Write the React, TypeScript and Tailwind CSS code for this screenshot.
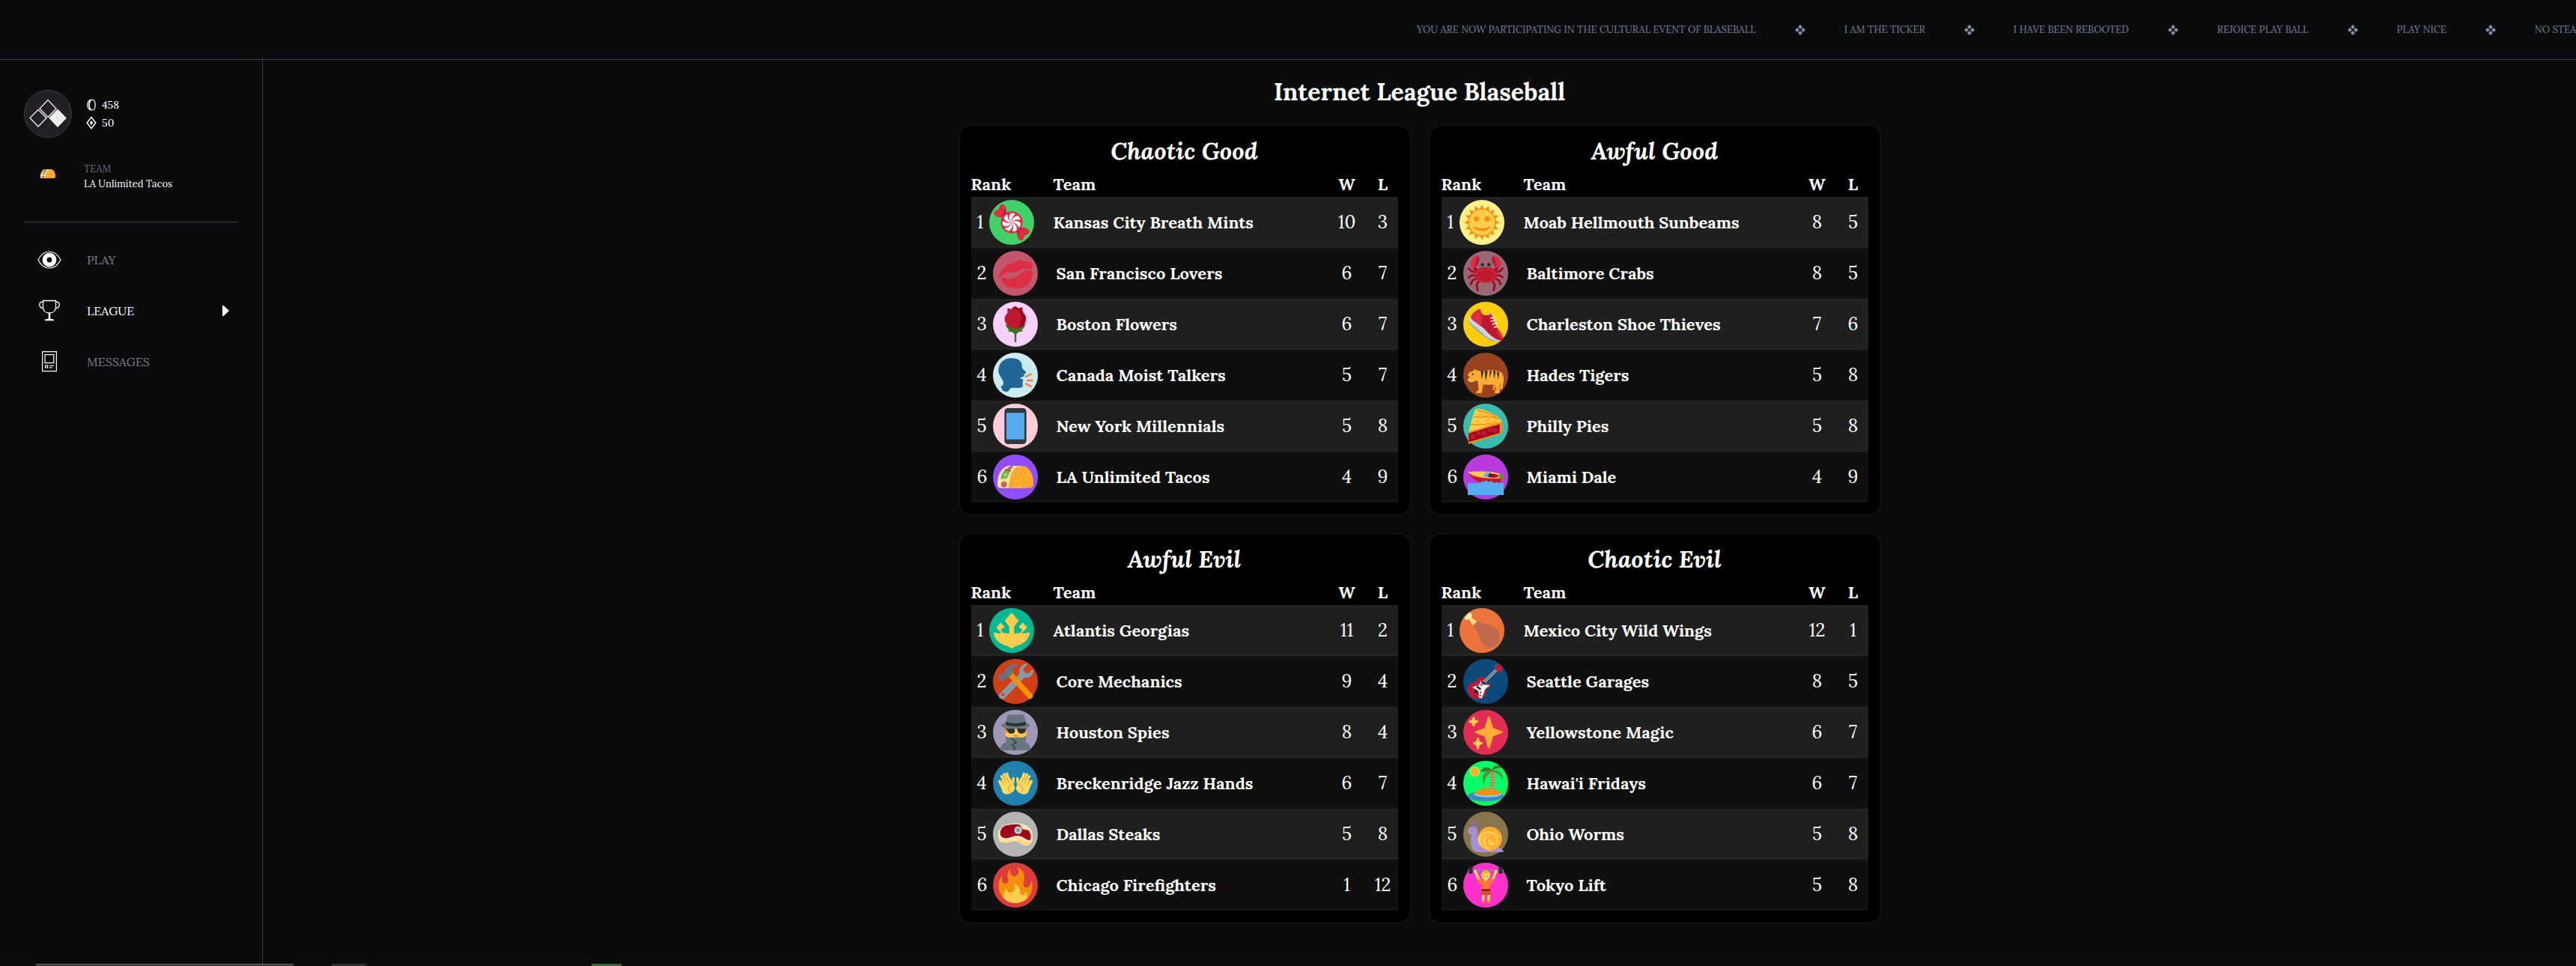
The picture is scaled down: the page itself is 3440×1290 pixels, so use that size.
import React from "react";

type Team = { name: string; w: number; l: number; bg: string; icon: () => React.ReactNode };

/* ---------- team emblems, all on a 36-unit grid ---------- */

const Candy = () => (
  <>
    <path fill="#DD2E44" d="M12 9C13 4 12 0 8.500 0 5.500 0 6 4 4.500 5 3 6 0 6 .2 9c.2 3 4 4 8 4z" />
    <path fill="#DD2E44" d="M24 27c-1 5 0 9 3.500 9 3 0 2.500-4 4-5 1.500-1 4.500-1 4.300-4-.2-3-4-4-8-4z" />
    <path fill="#BE1931" d="M13 9c0-2-1-4-2-5 .5 3-.5 5-4 8 2 1 4 1 5 1zM23 27c0 2 1 4 2 5-.5-3 .5-5 4-8-2-1-4-1-5-1z" />
    <circle cx="18" cy="18" r="11" fill="#DD2E44" />
    {[0, 51, 103, 154, 206, 257, 309].map((a) => (
      <path key={a} fill="#F5F8FA" transform={`rotate(${a} 18 18)`} d="M18 18c-3-3-3.500-6-1-9.200 2-.3 3.500.2 4.500 1C18.500 12 17.500 15 18 18z" />
    ))}
  </>
);
const Lips = () => (
  <>
    <path fill="#DD2E44" d="M1 22C2 17 9 8 14 8c3 0 3-1 5-2 3-2 5-1.500 7-.5 2 1 8 .5 9 3.500.6 2-.5 4-1.500 4.500C31 14 27 13 24 14c-3 1-3 3-7 3-5 0-9 0-11 2-2 2-5 5-5 3z" />
    <path fill="#DD2E44" d="M4 24c-.5-1.500 2-2 4-1.500 4 1 8 1 11-1 4-2 6-6 10-6.500 5-1 6 0 6 3 0 6-4 15-14 15C12 33 6 31 4 24z" />
  </>
);
const Rose = () => (
  <>
    <path fill="none" stroke="#3E721D" strokeWidth="1.800" d="M18 22v14M11 24.500c4 0 6 1 7 3.500 1-2.500 3-3.500 7-3.500" />
    <path fill="#3E721D" d="M8 18c2 10 18 10 20 0l-3 1H11z" />
    <path fill="#A0041E" d="M10 2l4 1 2-2 2-1 3 2 4-1c0 3 0 4 2 7 2 2 2 4 1 8-1 4-5 6-10 6z" />
    <path fill="#BE1931" d="M10 2l4 1 2-2 2 1c4 3 6 6 6 11 0 4-2 9-6 9-5 0-9-3-10.500-7C6.500 11 8 9 10 7V2z" />
    <path fill="#A0041E" d="M14 3l2-2 2-1 2 2v2c-2-1.500-4-1.500-6-1z" />
  </>
);
const Talker = () => (
  <>
    <path fill="#269" d="M14 1C6 1 1 6 1 14c0 4 5 8 5 12 0 2-2 3-3 4l1.500 1c-.5 2 2 4 5 3.500 3-.5 2-4 6-4 3 0 6 1 9-.5 2-1 0-3 .7-4 .8-1-.2-1 0-1.500.3-1 .8-1 .3-2-.5-1-3-1-3-1.500s3-1 4-2c.5-.5-.3-1.500.3-2 1-.6 2-1 1.700-2C28 13.500 24.500 12 24.500 9.500 25 5 22 1 14 1z" />
    <path stroke="#FF7A44" strokeWidth="1.900" strokeLinecap="round" d="M28.500 19.500l5-2.500M30 23.200h5M28.500 26.500l5 2.800" />
  </>
);
const Phone = () => (
  <>
    <rect x="7" width="22" height="36" rx="3.500" fill="#31373D" />
    <rect x="9" y="4.500" width="18" height="27" fill="#4289C1" />
    <rect x="9" y="5.200" width="18" height="25.500" fill="#55ACEE" />
  </>
);
const Taco = () => (
  <>
    <path fill="#FFE8B6" d="M0 25C0 15 5 7 12 7h11v22H4c-3 0-4-1-4-4z" />
    <path fill="#77B255" d="M4 16c2-5 5-7 9-8l1 4-5 8H3z" />
    <circle cx="9" cy="11" r="1.200" fill="#DD2E44" /><circle cx="12" cy="9" r="1.200" fill="#DD2E44" />
    <circle cx="14" cy="8" r="1" fill="#BE1931" /><circle cx="12" cy="11.500" r="1" fill="#DD2E44" />
    <path fill="#A6D388" d="M6 15l3-1 1 2-3 2z" />
    <circle cx="7" cy="22" r="2.500" fill="#FFD983" />
    <circle cx="6.500" cy="25.500" r="3" fill="#C1694F" />
    <path fill="#FFE8B6" d="M8 29c4-5 1-12 6-18 3-3 6-4 9-4l2 22z" />
    <path fill="#FFAC33" d="M10 29c3-5 1-11 5-17 3-4 6-5 9-5 8 0 12 8 12 17 0 4-1 5-4 5z" />
    {[[20, 10], [25, 10], [18, 15], [23, 14], [28, 14], [31, 18], [16, 20], [21, 19], [26, 19], [33, 23], [15, 25], [20, 25], [24, 23], [29, 23], [30, 27], [25, 27], [33, 27], [14, 28]].map(([x, y]) => (
      <circle key={`${x}-${y}`} cx={x} cy={y} r=".8" fill="#F4900C" />
    ))}
  </>
);
const Sun = () => (
  <>
    {Array.from({ length: 16 }, (_, i) => (
      <path key={i} fill="#F4900C" transform={`rotate(${i * 22.5} 18 18)`} d="M18 0l2.800 6h-5.600z" />
    ))}
    <circle cx="18" cy="18" r="14" fill="#F4900C" />
    <circle cx="18" cy="18" r="13" fill="#FFCC4D" />
    <circle cx="12.600" cy="14.500" r="2.700" fill="#F4900C" /><circle cx="23.400" cy="14.500" r="2.700" fill="#F4900C" />
    <path fill="#F4900C" d="M9 22c5 2.500 13 2.500 18 0-2 6-16 6-18 0z" />
  </>
);
const Crab = () => (
  <>
    <path fill="none" stroke="#A0041E" strokeWidth="2" strokeLinecap="round" strokeLinejoin="round" d="M9 17l-5-1-3-3M8 20H4l-3 2M9 23l-4 2-2 4M11 26l-2 3 1 6M27 17l5-1 3-3M28 20h4l3 2M27 23l4 2 2 4M25 26l2 3-1 6" />
    <path fill="none" stroke="#A0041E" strokeWidth="2.500" d="M6 10c0 3 2 5 5 6M30 10c0 3-2 5-5 6" />
    <path fill="#DD2E44" d="M3 9C3 4 6 0 10 0l1 5-3 7c-3 2-5 0-5-3zM33 9c0-5-3-9-7-9l-1 5 3 7c3 2 5 0 5-3z" />
    <path fill="#BE1931" d="M10 0c3 3 2 7-2 12-2-1 0-5 2-12zM26 0c-3 3-2 7 2 12 2-1 0-5-2-12z" />
    <path stroke="#66757F" strokeWidth="1" d="M15 10v4M21 10v4" />
    <circle cx="14.700" cy="9.300" r="1.700" fill="#292F33" /><circle cx="21.300" cy="9.300" r="1.700" fill="#292F33" />
    <path fill="#BE1931" d="M6.500 18c1-4 6-6 11.500-6s10.500 2 11.500 6c.5 6-6 10-11.500 10S6 24 6.500 18z" />
    <path fill="none" stroke="#DD2E44" strokeWidth="1.500" strokeDasharray="1.500 1" d="M8 19c2-4 6-5 10-5s8 1 10 5" />
    <path fill="none" stroke="#DD2E44" strokeWidth="1" d="M11 25c4 3 10 3 14 0" />
  </>
);
const Shoe = () => (
  <>
    <path fill="#99AAB5" d="M.5 14c0 3 7 9 13 14 7 6 14 8.500 18 7z" />
    <path fill="#CCD6DD" d="M3 11c-3 0-3 2-1.500 4C4 18 8 21 14 26c7 7 14 10 19 8z" />
    <path fill="#BE1931" d="M11 3c2-1 2 2 3 4 2 3 4 2 7 1 2-.5 3 0 4 3 1 5 4 10 7 14 3 5 5 8 3 9-5 1-12-4-18-11C11 17 5 15 3 11c1-3 5-7 8-8z" />
    <path fill="#DD2E44" d="M11 3c-3 1-7 5-8 8 2 4 6 5 10 9 2-4 2-13-2-17zM29 23c1 5 1 8 6 9 0-2-3-7-4-9z" />
    <path stroke="#F5F8FA" strokeWidth="1.200" strokeLinecap="round" d="M23 12l4-1M23.500 15l4-1M25 18l4-1M26.500 21l4-1" />
    <path fill="none" stroke="#99AAB5" strokeWidth="1.300" d="M20 9l3-2 2 3" />
  </>
);
const Tiger = () => (
  <>
    <path fill="none" stroke="#FFAC33" strokeWidth="2.400" strokeLinecap="round" d="M33 16c3 4 2 8 .5 15" />
    <path fill="#FFAC33" d="M0 21c0-5 1-6 5-7l2-2 2 1c5 2 9 0 14 0 6 0 11 1 12 7 1 5-3 6-3 10v6h-5l.5-3 1-1-1-4c-3-1-9 0-12-.5L14 36H8.500l.5-2 2-1-1-9c-2-1-3 1-6 .5-2 0-4-1-4-3.500z" />
    <path fill="#F4900C" d="M28 28l-1 5h-2l.5-5zM15 27l-1 5 1-1 1-4z" />
    <path fill="#292F33" d="M13 13l1 9 2-8zM17 13l1 11 2-10zM22 13v8l2-7zM25.500 13l1 9 1.500-8zM29 14l1.500 8 1-6z" />
    <circle cx="5" cy="17" r=".9" fill="#292F33" /><circle cx=".8" cy="20" r=".9" fill="#292F33" />
    <path fill="#FFD983" d="M0 22c1 2 4 2 6 1l-1 2c-3 0-5-1-5-3z" />
  </>
);
const Pie = () => (
  <>
    <path fill="#F4900C" d="M1 23l32-9c2 0 2 2 1.500 6-.5 4-.5 5-2.500 6L1 36c-1-3-1-9 0-13z" />
    <path fill="#A0041E" d="M1 25l31-9v9L1 34z" />
    <circle cx="5.500" cy="28.500" r="2.600" fill="#BE1931" /><circle cx="11" cy="25" r="2.300" fill="#BE1931" /><circle cx="16.500" cy="25.500" r="2.600" fill="#BE1931" /><circle cx="22" cy="22" r="2.300" fill="#BE1931" /><circle cx="27" cy="22" r="2.600" fill="#BE1931" />
    <path fill="#FFCC4D" d="M8 1c2-2 18 3 26 11l-1 3C22 18 11 22 1 25c1-7 4-18 7-24z" />
    <path fill="none" stroke="#F4900C" strokeWidth="1.300" d="M9 2c8 1 16 4 23 10M6 9c4-2 6 2 9 0s5 2 8 0 4 2 6 1M3 17c3-2 5 1 8-.5s5 1 8-.5 5 1 8-.5 4 1 6 0" />
    <path fill="none" stroke="#F4900C" strokeWidth="1.500" d="M1 24.500C11 21 22 18 33 15" />
    <path stroke="#FFAC33" strokeWidth="1.500" d="M11 6l5 1M18 7l5 2M8 13l4 .5M17 12l5 .5M24 13l5 1" />
  </>
);
const Boat = () => (
  <>
    <path fill="#BE1931" d="M1 14c3 5 8 9 14 10h17l3-6z" />
    <path fill="#DD2E44" d="M1 15c6 4 18 6 33 5l1-3z" />
    <path fill="#FFCC4D" d="M0 13c8-1 22-1 30 1 5 1 6 2 5 4-1 1-8 1.500-15 1C11 18.500 4 17 0 13z" />
    <path fill="#A0041E" d="M20 15c4-1 9 0 11 2-2 2-8 2-12 .5z" />
    <path fill="#55ACEE" d="M15 17l4-4 3 1-2 4z" /><path fill="#292F33" d="M22 13l3 5h-4z" />
    <path fill="#5C913B" d="M31 15c3-1 5 1 5 5l-2 2c0-3-1-4-3-4z" />
    <path fill="#55ACEE" d="M12 24l3-2 2 1 1-2 3 2 3-1 2 2 4-1 2 2v1H11z" />
    <path fill="#55ACEE" d="M0 24h36v12H0z" />
  </>
);
const Trident = () => (
  <path fill="#FFCC4D" d="M18 0l7 8-4.500 6v7l6-.5 2.500-3-4-3L29 10l4.500 5-3.500 3.500-1.500 2.500c3 0 5-.5 7.500-1.500 0 7-6 12.500-14 14L18 36l-4-2.500c-8-1.500-14-7-14-14C2.500 20.500 4.500 21 7.500 21L6 18.500 2.500 15 7 10l4 4.500-4 3 2.500 3 6 .5v-7L11 8z" />
);
const Tools = () => (
  <>
    <path fill="#8899A6" d="M2.500 30L22 10c-1-5 2-9 7-10l1 1-4 4 1 4 4 1 4-4 1 1c0 5-4 8-9 7L8 34c-4 4-9 0-5.500-4z" />
    <circle cx="5.500" cy="31" r="1.500" fill="#D23F17" />
    <path fill="#F4900C" d="M11 13l4-4 20 22c2 3-2 6-4 4z" />
    <path fill="#66757F" d="M0 13l3-3 1 1 3-3c2-5 7-9 14-7l-.5 1.500C16 2 14 6 16 9l-5 5-4-.5-.5 3.500L4 18z" />
  </>
);
const Spy = () => (
  <>
    <path fill="#66757F" d="M3 36c0-6 3-7 6-8l-1-6h21l-1 6c3 1 5 2 5 8z" />
    <path fill="#FFCC4D" d="M8 12h21v8c0 1-2 3-4 3H12c-2 0-4-1-4-3z" />
    <path fill="#F4900C" d="M8 13h2v6l-2-1zM27 13h2v5l-2 1z" />
    <path fill="#292F33" d="M8 14h21v1l-1 1c0 4-7 5-8 0h-2c-1 5-8 4-8 0l-2-1z" />
    <path fill="#FFCC4D" d="M17 14l1 5h2l-.5-5z" /><path fill="#C1694F" d="M16 21h5v1h-5z" />
    <path fill="#66757F" d="M8 9L10 2c1-3 4-2 8-1.500 5-.5 8-1.500 9 2L29 9z" />
    <ellipse cx="18.300" cy="11" rx="14.300" ry="3.500" fill="#66757F" />
    <path fill="#292F33" d="M8.500 7.500c6 2 13 2 20 0v3c-6 2-14 2-20 0z" />
    <path fill="none" stroke="#292F33" strokeWidth=".9" d="M14 24l5 4-4 2.500 2 3V36" />
  </>
);
const Hand = () => (
  <>
    <path fill="none" stroke="#FFDC5D" strokeWidth="2.500" strokeLinecap="round" d="M2 16l3 6M4 11l5 8M6.500 9l5 10M9.500 8.500L13 19M16 13l-1 9" />
    <path fill="#FFDC5D" d="M1 16l12-3 3 7 1.500 2c0 4-4 7-8 7-3 0-4-1-5-4z" />
    <path fill="none" stroke="#EF9645" strokeWidth=".8" strokeLinecap="round" d="M3.500 15l2.500 4M6 12l3 6M8.500 11l3 6M12 27c-3-4 0-7 4-9" />
  </>
);
const Hands = () => (<><Hand /><g transform="translate(36 0) scale(-1 1)"><Hand /></g></>);
const Steak = () => (
  <>
    <path fill="#FFD983" d="M1 14v8c0 4 5 6 11 4 5-1 8-1 11 1 3 3 7 3 10 1 2-2 2-5 2-9z" />
    <path fill="#FFE8B6" d="M10 8c8-2 20-1 24 6 2 5 2 12-2 12-4 1-5-4-12-3-5 1-8 2-13 2-4 0-6-3-6-7 0-5 4-9 9-10z" />
    <path fill="#A0041E" d="M11 8.800c5-1 10-1 12 .2l2 4 6 1c3 3 3 10 1 10-4 0-6-4.500-12-4.500-5 0-8 3-12 2.500-4-.5-6-3-5-7 1-4 4-5.800 8-6.200z" />
    <circle cx="20.700" cy="14" r="3.800" fill="#CCD6DD" /><circle cx="20.700" cy="14" r="2" fill="#8899A6" />
  </>
);
const Fire = () => (
  <>
    <path fill="#F4900C" d="M35 19c0-2.062-.367-4.039-1.040-5.868-.46 5.389-3.333 8.157-6.335 6.868-2.812-1.208-.917-5.917-.777-8.164.236-3.809-.012-8.169-6.931-11.794 2.875 5.500.333 8.917-2.333 9.125-2.958.231-5.667-2.542-4.667-7.042-3.238 2.386-3.332 6.402-2.333 9 1.042 2.708-.042 4.958-2.583 5.208-2.840.28-4.418-3.041-2.963-8.333C2.520 10.965 1 14.805 1 19c0 9.389 7.611 17 17 17s17-7.611 17-17z" />
    <path fill="#FFCC4D" d="M28.394 23.999c.148 3.084-2.561 4.293-4.019 3.709-2.106-.843-1.541-2.291-2.083-5.291s-2.625-5.083-5.708-6c2.250 6.333-1.247 8.667-3.080 9.084-1.872.426-3.753-.001-3.968-4.007C7.352 23.668 6 26.676 6 30c0 .368.023.73.055 1.090C9.125 34.124 13.342 36 18 36s8.875-1.876 11.945-4.910c.032-.36.055-.722.055-1.090 0-2.187-.584-4.236-1.606-6.001z" />
  </>
);
const Drumstick = () => (
  <>
    <path fill="#C1694F" d="M14 8c3 3 6 3 11 4 8 2 12 9 10.500 15-1 6-6 9-11.500 8-7-2-8-9-10-14-1-3-3-5-5-8z" />
    <path fill="#FFD983" d="M3 3c1-4 5-3 5 0l-.3 2L13 9l-2 2-2 2-4-6c-3 2-7-2-2-4z" />
    <path fill="#FFE8B6" d="M3 3c1-4 5-3 5 0L7 5 3 7C0 7-.5 4 3 3z" />
  </>
);
const Guitar = () => (
  <>
    <path fill="#BE1931" d="M12 14c5-2 7 1 7 4 0 2 4 2 4 4s-4 2-4.500 5c0 5-3 9-8.500 9-6 0-10-5-10-11 0-4 2-5 6-6 3-.5 3-4 6-5z" />
    <path fill="#F5F8FA" d="M13 18l3-1 1 4 5 1c-1 2-4 2-5 5l-3 8-3-1v-6l-6-4 1-1 5-1z" />
    <path stroke="#99AAB5" strokeWidth="3" d="M13 22L29 6" /><path stroke="#292F33" strokeWidth="1" strokeDasharray="1 1" d="M13 22L29 6" />
    <path fill="#BE1931" d="M27 5c1-2 2-4 4-5l4 4c0 2-2 4-4 5z" />
    <path stroke="#66757F" strokeWidth="1" strokeDasharray="1 1" d="M26 4l4-4M32 9l3-3" />
    <path stroke="#292F33" strokeWidth="2" d="M14 18l4 3M9 23l4 3" />
    <circle cx="8" cy="28" r="2" fill="#292F33" /><circle cx="13" cy="29" r=".8" fill="#292F33" /><circle cx="12.500" cy="32" r=".8" fill="#292F33" />
  </>
);
const Sparkles = () => (
  <>
    <path fill="#FFAC33" d="M34.347 16.893l-8.899-3.294-3.323-10.891c-.128-.42-.517-.708-.956-.708-.439 0-.828.288-.956.708l-3.322 10.891-8.900 3.294c-.393.146-.653.519-.653.938 0 .418.26.793.653.938l8.895 3.293 3.324 11.223c.126.424.516.715.959.715.442 0 .833-.291.959-.716l3.324-11.223 8.896-3.293c.391-.144.652-.518.652-.937 0-.418-.261-.792-.653-.938z" />
    <path fill="#FFCC4D" d="M14.347 27.894l-2.314-.856-.9-3.300c-.118-.436-.513-.738-.964-.738-.451 0-.846.302-.965.737l-.9 3.300-2.313.856c-.393.146-.653.52-.653.938 0 .418.26.792.653.938l2.301.853.907 3.622c.112.444.511.756.97.756.459 0 .858-.312.97-.757l.907-3.622 2.301-.853c.393-.144.653-.519.653-.937 0-.418-.26-.793-.653-.937zM10.009 6.231l-2.364-.875-.876-2.365c-.145-.393-.519-.653-.938-.653-.418 0-.792.26-.938.653l-.875 2.365-2.365.875c-.393.146-.653.52-.653.938 0 .418.26.793.653.938l2.365.875.875 2.365c.146.393.52.653.938.653.418 0 .792-.26.938-.653l.875-2.365 2.365-.875c.393-.146.653-.52.653-.938 0-.418-.26-.792-.653-.938z" />
  </>
);
const Island = () => (
  <>
    <circle cx="7" cy="6.300" r="5" fill="#FFCC4D" /><circle cx="7" cy="6.300" r="4" fill="#FFAC33" />
    <path fill="#3B88C3" d="M0 31c0-3 8-5 18-5s18 2 18 5c0 3-8 5-18 5S0 34 0 31z" />
    <path fill="#88C9F9" d="M6 28h28c0 3-6 4-14 4S6 31 6 28z" />
    <path fill="#F4900C" d="M7 28c2-3 7-5 13-5 7 0 12 2 13.500 5-2 3-25 3-26.500 0z" />
    <path fill="none" stroke="#C1694F" strokeWidth="3.600" d="M24 7c2 6 1 12-.5 18" />
    <path fill="none" stroke="#D99E82" strokeWidth="3.600" strokeDasharray="1.600 1.200" d="M24 7c2 6 1 12-.5 18" />
    <path fill="#3E721D" d="M13 7c1-5 8-7 11-2 2-6 8-6 11-2-4-1-8 0-11 3-4 0-7-1-11 1z" />
    <path fill="#5C913B" d="M24 5c-8-1-11 6-8 15 1-7 3-10 8-13 6 0 9 3 11 8 1-7-4-11-11-10z" />
  </>
);
const Snail = () => (
  <>
    <path fill="none" stroke="#9266CC" strokeWidth="1.600" strokeLinecap="round" d="M4 6c0 2 1 4 2 6M9 6c1 2 0 4-1 6" />
    <circle cx="4" cy="6.200" r="1.300" fill="#9266CC" /><circle cx="8.700" cy="6.200" r="1.300" fill="#9266CC" />
    <path fill="#AA8DD8" d="M6 10.500c3 0 4 3 4 7 0 5 2 11 8 13h11c3 1 7 3 7 5-1 .5-3 .5-6 .5H9c-6-2-6-8-6-12 0-4 1-4 0-6-2 0-3-1-3-3 0-3 3-4.500 6-4.500z" />
    <circle cx="22.300" cy="22.500" r="12" fill="#FFAC33" />
    <path fill="#FFCC4D" d="M10 25c0-6 5-10 11-10 6 0 10 4 10 8s-3 6-7 6-5-5-2-7c1-1 2 0 1 2 0 2 4 2 4-1 0-4-7-5-9 0-1 5 2 8 6 10-6 1-12-2-14-8z" />
    <path fill="none" stroke="#FFAC33" strokeWidth="1.500" d="M17 31c-6-6-3-13 4-13 6 0 8 6 5 9" />
  </>
);
const Lifter = () => (
  <>
    <path stroke="#8899A6" strokeWidth="1" d="M2 3h32" />
    <rect x="1" width="4" height="6.500" rx="1" fill="#292F33" /><rect x="31" width="4" height="6.500" rx="1" fill="#292F33" />
    <path fill="#66757F" d="M0 2h1v2.500H0zM35 2h1v2.500h-1z" />
    <path fill="none" stroke="#FFDC5D" strokeWidth="2.600" strokeLinecap="round" strokeLinejoin="round" d="M7.500 4l3 7 4 4M28.500 4l-3 7-4 4" />
    <path fill="#FF7A2F" d="M11 11l4 2h6l4-2 1 3-4 4v7h-8v-7l-4-4z" />
    <circle cx="18" cy="8.500" r="4.300" fill="#FFDC5D" />
    <path fill="#FFAC33" d="M13 9c-1-7 11-8 10 0-1-2-2-3-4-3-2 1-5 0-6 3z" />
    <circle cx="16.500" cy="9" r=".5" fill="#662113" /><circle cx="19.800" cy="9" r=".5" fill="#662113" />
    <path fill="#FFDC5D" d="M16 12h4l-2 2.500z" />
    <path fill="#D5501F" d="M13.500 23h9.500v5h-4l-.5-2-.5 2h-4.500z" /><path fill="#662113" d="M14 22h8.500v1.700H14z" />
    <path fill="#FFDC5D" d="M14 28h3v3h-3zM19.500 28h3v3h-3z" /><path fill="#FFCC4D" d="M14 31h3v3h-3zM19.500 31h3v3h-3z" />
    <path fill="#F4752F" d="M14 34h3v2h-3zM19.500 34h3v2h-3z" />
  </>
);

/* ---------- league data ---------- */

const divisions: { name: string; teams: Team[] }[] = [
  {
    name: "Chaotic Good",
    teams: [
      { name: "Kansas City Breath Mints", w: 10, l: 3, bg: "bg-[#40d168]", icon: Candy },
      { name: "San Francisco Lovers", w: 6, l: 7, bg: "bg-[#c1566d]", icon: Lips },
      { name: "Boston Flowers", w: 6, l: 7, bg: "bg-[#f7d1ff]", icon: Rose },
      { name: "Canada Moist Talkers", w: 5, l: 7, bg: "bg-[#c9ebef]", icon: Talker },
      { name: "New York Millennials", w: 5, l: 8, bg: "bg-[#ffccd8]", icon: Phone },
      { name: "LA Unlimited Tacos", w: 4, l: 9, bg: "bg-[#924dff]", icon: Taco },
    ],
  },
  {
    name: "Awful Good",
    teams: [
      { name: "Moab Hellmouth Sunbeams", w: 8, l: 5, bg: "bg-[#fff08a]", icon: Sun },
      { name: "Baltimore Crabs", w: 8, l: 5, bg: "bg-[#966974]", icon: Crab },
      { name: "Charleston Shoe Thieves", w: 7, l: 6, bg: "bg-[#ffce0a]", icon: Shoe },
      { name: "Hades Tigers", w: 5, l: 8, bg: "bg-[#994220]", icon: Tiger },
      { name: "Philly Pies", w: 5, l: 8, bg: "bg-[#3abdae]", icon: Pie },
      { name: "Miami Dale", w: 4, l: 9, bg: "bg-[#b93bdb]", icon: Boat },
    ],
  },
  {
    name: "Awful Evil",
    teams: [
      { name: "Atlantis Georgias", w: 11, l: 2, bg: "bg-[#00b894]", icon: Trident },
      { name: "Core Mechanics", w: 9, l: 4, bg: "bg-[#d23f17]", icon: Tools },
      { name: "Houston Spies", w: 8, l: 4, bg: "bg-[#a198b8]", icon: Spy },
      { name: "Breckenridge Jazz Hands", w: 6, l: 7, bg: "bg-[#2080ae]", icon: Hands },
      { name: "Dallas Steaks", w: 5, l: 8, bg: "bg-[#b3b5b4]", icon: Steak },
      { name: "Chicago Firefighters", w: 1, l: 12, bg: "bg-[#dc3c3b]", icon: Fire },
    ],
  },
  {
    name: "Chaotic Evil",
    teams: [
      { name: "Mexico City Wild Wings", w: 12, l: 1, bg: "bg-[#ec733c]", icon: Drumstick },
      { name: "Seattle Garages", w: 8, l: 5, bg: "bg-[#0d4a7c]", icon: Guitar },
      { name: "Yellowstone Magic", w: 6, l: 7, bg: "bg-[#e12d53]", icon: Sparkles },
      { name: "Hawai'i Fridays", w: 6, l: 7, bg: "bg-[#03ff64]", icon: Island },
      { name: "Ohio Worms", w: 5, l: 8, bg: "bg-[#87764b]", icon: Snail },
      { name: "Tokyo Lift", w: 5, l: 8, bg: "bg-[#ff30cc]", icon: Lifter },
    ],
  },
];

const ticker = [
  "YOU ARE NOW PARTICIPATING IN THE CULTURAL EVENT OF BLASEBALL",
  "I AM THE TICKER",
  "I HAVE BEEN REBOOTED",
  "REJOICE PLAY BALL",
  "PLAY NICE",
  "NO STEALING",
];

function TickerMark() {
  return (
    <svg viewBox="0 0 18 18" className="size-[18px] shrink-0 fill-[#8c8ca6]" aria-hidden="true">
      <path d="M9 2l3 3-3 3-3-3zM9 10l3 3-3 3-3-3zM5 6l3 3-3 3-3-3zM13 6l3 3-3 3-3-3z" />
    </svg>
  );
}

function DivisionCard({ name, teams }: { name: string; teams: Team[] }) {
  return (
    <section className="rounded-2xl border border-[#18191a] bg-black px-4 pt-3 pb-4">
      <h2 className="text-center text-[32px] leading-[44px] font-bold [font-style:oblique_20deg]">{name}</h2>
      <table className="w-full table-fixed border-separate border-spacing-0">
        <thead>
          <tr className="h-[39px] text-[22px] leading-8">
            <th scope="col" className="w-[110px] p-0 pt-1 text-left">Rank</th>
            <th scope="col" className="p-0 pt-1 text-left">Team</th>
            <th scope="col" className="w-14 p-0 pt-1 text-center">W</th>
            <th scope="col" className="w-10 p-0 pt-1 text-center">L</th>
          </tr>
        </thead>
        <tbody>
          {teams.map((t, i) => {
            const cell = i % 2 === 0 ? "border-y-4 border-[#222222] bg-[#1f1f1f] p-0" : "border-y-4 border-[#111111] bg-[#0f0f0f] p-0";
            const Icon = t.icon;
            return (
              <tr key={t.name} className="text-2xl leading-8">
                <td className={cell}>
                  <div className="flex items-center pl-2">
                    <span className={i === 0 ? "w-4" : "w-[21px]"}>{i + 1}</span>
                    <span className={`flex size-[60px] shrink-0 items-center justify-center rounded-full ${t.bg}`}>
                      <svg viewBox="0 0 36 36" className="size-12" fill="none" aria-hidden="true"><Icon /></svg>
                    </span>
                  </div>
                </td>
                <td className={`${cell} text-[22px] leading-8 font-bold`}>
                  <a href="#team" className={i === 0 ? "" : "pl-1"}>{t.name}</a>
                </td>
                <td className={`${cell} text-center`}>{t.w}</td>
                <td className={`${cell} text-center`}>{t.l}</td>
              </tr>
            );
          })}
        </tbody>
      </table>
    </section>
  );
}

function Sidebar() {
  return (
    <aside className="w-[351px] shrink-0 border-r border-[#3d3d47] pt-10 pr-8 pl-8">
      <div className="flex items-center gap-5">
        <svg viewBox="0 0 64 64" className="size-16" fill="none" role="img" aria-label="Profile picture">
          <circle cx="32" cy="32" r="31.500" fill="#232025" stroke="#3b3c45" />
          <g stroke="#f2eded" strokeWidth="1.300">
            <path d="M32 13.500l11 11.500-11 11.500L21 25zM19 26.500l11 11.200L19 49 8 37.500z" />
            <path fill="#f2eded" d="M45 26.500l11 11.200L45 49 34 37.500z" />
          </g>
          <path stroke="#b9b3b5" strokeWidth=".8" d="M43 36l2 1M45 40l1 1M47 34l1 1" />
        </svg>
        <ul className="text-sm leading-6 text-white">
          <li className="flex items-center gap-2">
            <svg viewBox="0 0 12 16" className="h-4 w-3" fill="none" stroke="#fff" strokeWidth="1.200" aria-hidden="true">
              <ellipse cx="7.300" cy="8" rx="4" ry="7" /><path d="M6 1C3 1 .7 4 .7 8S3 15 6 15M4 2.500C2.500 5 2.500 11 4 13.500" />
            </svg>
            458
          </li>
          <li className="flex items-center gap-2">
            <svg viewBox="0 0 12 16" className="h-4 w-3 overflow-visible" fill="none" stroke="#fff" strokeWidth="1.500" aria-hidden="true">
              <path d="M6 .5l5.800 7.500L6 15.500.2 8z" /><path fill="#fff" stroke="none" d="M6 5l2.200 3L6 11 3.800 8z" />
            </svg>
            50
          </li>
        </ul>
      </div>
      <div className="mt-8 flex gap-4">
        <span className="flex w-16 items-start justify-center pt-1.5">
          <svg viewBox="0 0 36 36" className="size-5" fill="none" aria-hidden="true"><Taco /></svg>
        </span>
        <p className="text-[13px] leading-5 text-white">
          <span className="block text-[#6a6b7c]">TEAM</span>
          LA Unlimited Tacos
        </p>
      </div>
      <nav className="mt-10 border-t border-[#3d3d47] pt-4 text-base">
        <a href="#play" className="flex h-[68px] items-center text-[#7c7d8c]">
          <svg viewBox="0 0 32 32" className="mr-[34px] ml-[18px] size-8" fill="none" aria-hidden="true">
            <path stroke="#fff" strokeWidth="1.200" d="M1 16C5 8 10 5 16 5s11 3 15 11c-4 8-9 11-15 11S5 24 1 16z" />
            <circle cx="16" cy="16" r="6.400" stroke="#fff" strokeWidth="6" />
          </svg>
          PLAY
        </a>
        <a href="#league" className="flex h-[68px] items-center text-white">
          <svg viewBox="0 0 32 32" className="mr-[34px] ml-[18px] size-8" fill="none" stroke="#fff" strokeWidth="1.300" aria-hidden="true">
            <path d="M7.500 2.500h17V11c0 5-3.500 8-8.500 8s-8.500-3-8.500-8zM7.500 4.500C1 2.500 1 13 8 12.500M24.500 4.500c6.500-2 6.500 8.500-.5 8" />
            <path strokeWidth="2.500" d="M16 19v8" /><path fill="#fff" d="M10 28.500l6-1.500 6 1.500z" />
          </svg>
          LEAGUE
          <svg viewBox="0 0 9 14" className="mr-3 ml-auto h-3.5 w-[9px] fill-white" aria-hidden="true"><path d="M0 0h1.500L9 7l-7.500 7H0z" /></svg>
        </a>
        <a href="#messages" className="flex h-[68px] items-center text-[#7c7d8c]">
          <svg viewBox="0 0 32 32" className="mr-[34px] ml-[18px] size-8" fill="none" stroke="#fff" strokeWidth="1.200" aria-hidden="true">
            <path d="M6.600 2.600h18.800v26H6.600z" /><path d="M10 6.600h11.800v11H10zM10.500 21h3v3h-3zM15.500 21.500H22M15.500 24H20" />
          </svg>
          MESSAGES
        </a>
      </nav>
    </aside>
  );
}

export default function App() {
  return (
    <div className="flex min-h-screen flex-col overflow-hidden bg-[#0a0b0d] font-['Lora','Liberation_Serif',serif] text-white">
      <header className="flex h-20 items-center overflow-hidden border-b border-[#3d3d47] pl-[55%]">
        <div className="flex items-center gap-[50px] text-[13px] leading-5 whitespace-nowrap text-[#7d7d96]">
          {ticker.map((t, i) => (
            <React.Fragment key={t}>
              {i > 0 && <TickerMark />}
              <span>{t}</span>
            </React.Fragment>
          ))}
        </div>
      </header>
      <div className="flex flex-1">
        <Sidebar />
        <main className="flex-1 pt-[21px]">
          <h1 className="text-center text-[32px] leading-[44px] font-bold">Internet League Blaseball</h1>
          <div className="mx-auto mt-[22px] grid max-w-[1232px] grid-cols-2 gap-6">
            {divisions.map((d) => (
              <DivisionCard key={d.name} {...d} />
            ))}
          </div>
        </main>
      </div>
      <footer className="flex h-[3px] bg-[#0e0b0b]" aria-hidden="true">
        <span className="ml-12 w-[344px] border-t border-[#6a6a68] bg-[#3d3a3c]" />
        <span className="ml-[51px] w-11 bg-[#302e30]" />
        <span className="w-[3px] bg-[#222022]" />
        <span className="ml-[300px] w-10 bg-[#38662f]" />
      </footer>
    </div>
  );
}
